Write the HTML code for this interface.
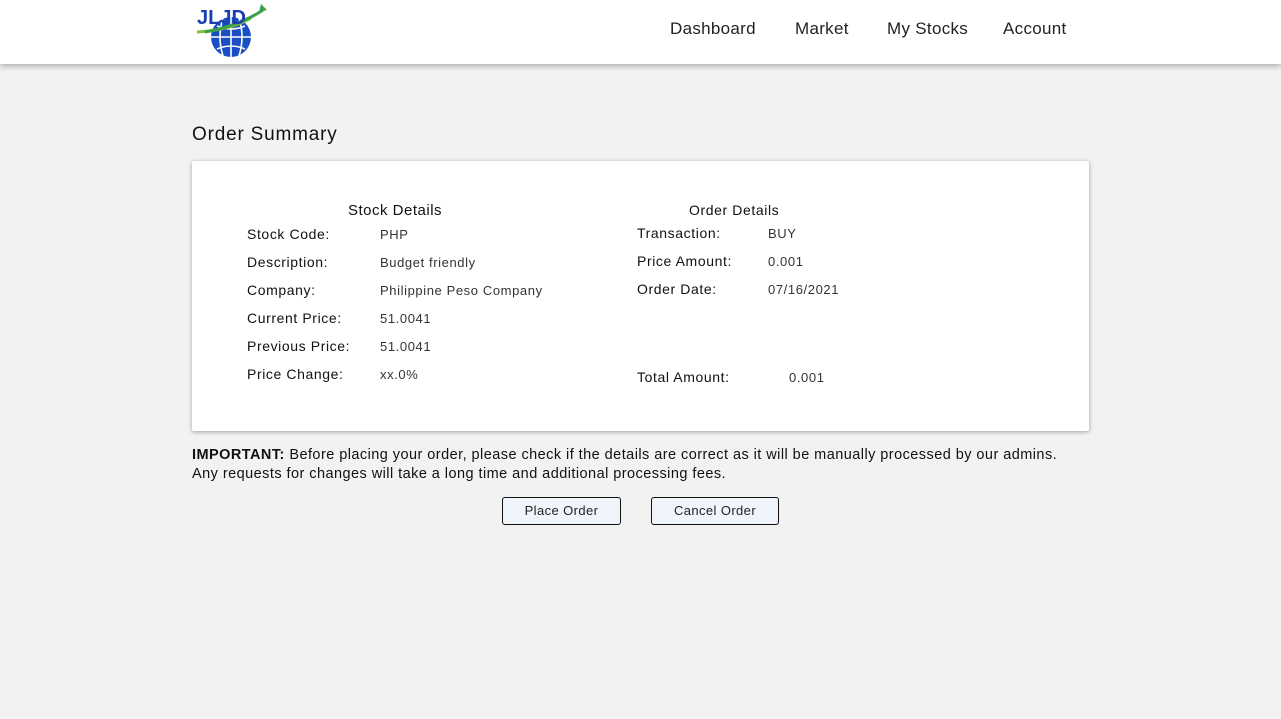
<!DOCTYPE html>
<html><head><style>
body{margin:0;width:1281px;height:719px;background:#f2f2f2;font-family:"Liberation Sans",sans-serif;color:#111;position:relative;overflow:hidden}
.nav{position:absolute;top:0;left:0;width:1281px;height:64px;background:#fff;box-shadow:0 2px 6px rgba(0,0,0,.3)}
.nav a{position:absolute;top:19px;font-size:17px;color:#222;letter-spacing:.3px}
.a{position:absolute;white-space:nowrap}
.card{position:absolute;left:192px;top:161px;width:897px;height:270px;background:#fff;box-shadow:0 1px 4px rgba(0,0,0,.35);border-radius:2px}
.l{font-size:14px;color:#111;letter-spacing:.6px}
.v{font-size:13px;color:#333;letter-spacing:.6px}
.btn{position:absolute;top:497px;height:26px;border:1px solid #111;border-radius:3px;background:#f0f5fc;font-size:13px;text-align:center;line-height:26px;color:#222;letter-spacing:.4px}
</style></head><body>
<div class="nav">
<svg style="position:absolute;left:195px;top:2px" width="76" height="56" viewBox="0 0 76 56">
<circle cx="36" cy="35" r="20" fill="#1a4fc4"/>
<path d="M16 35h40M36 15v40M22 24q14 6 28 0M22 47q14-6 28 0M28 16q-6 19 0 38M44 16q6 19 0 38" stroke="#fff" stroke-width="1.6" fill="none"/>
<path d="M2 30q34-2 54-14" stroke="#7fc13a" stroke-width="3" fill="none"/>
<path d="M10 30q34-6 58-22" stroke="#3aa14a" stroke-width="3" fill="none"/>
<path d="M66 2l6 6-8 2z" fill="#3aa14a"/>
<text x="2" y="22" font-family="Liberation Sans" font-weight="bold" font-size="20" fill="#1a3fb0">JLJD</text>
</svg>
<a style="left:670px">Dashboard</a><a style="left:795px">Market</a><a style="left:887px">My Stocks</a><a style="left:1003px">Account</a>
</div>
<div class="a" style="left:192px;top:124px;font-size:19px;letter-spacing:.8px">Order Summary</div>
<div class="card"></div>
<div class="a" style="left:348px;top:202px;font-size:15px;letter-spacing:.5px">Stock Details</div>
<div class="a" style="left:689px;top:202px;font-size:14px;letter-spacing:.6px">Order Details</div>
<div class="a l" style="left:247px;top:226px">Stock Code:</div><div class="a v" style="left:380px;top:227px">PHP</div>
<div class="a l" style="left:247px;top:254px">Description:</div><div class="a v" style="left:380px;top:255px">Budget friendly</div>
<div class="a l" style="left:247px;top:282px">Company:</div><div class="a v" style="left:380px;top:283px">Philippine Peso Company</div>
<div class="a l" style="left:247px;top:310px">Current Price:</div><div class="a v" style="left:380px;top:311px">51.0041</div>
<div class="a l" style="left:247px;top:338px">Previous Price:</div><div class="a v" style="left:380px;top:339px">51.0041</div>
<div class="a l" style="left:247px;top:366px">Price Change:</div><div class="a v" style="left:380px;top:367px">xx.0%</div>
<div class="a l" style="left:637px;top:225px">Transaction:</div><div class="a v" style="left:768px;top:226px">BUY</div>
<div class="a l" style="left:637px;top:253px">Price Amount:</div><div class="a v" style="left:768px;top:254px">0.001</div>
<div class="a l" style="left:637px;top:281px">Order Date:</div><div class="a v" style="left:768px;top:282px">07/16/2021</div>
<div class="a l" style="left:637px;top:369px">Total Amount:</div><div class="a v" style="left:789px;top:370px">0.001</div>
<div class="a" style="left:192px;top:446px;font-size:14.5px;line-height:19px;color:#111;letter-spacing:.45px"><b>IMPORTANT:</b> Before placing your order, please check if the details are correct as it will be manually processed by our admins.<br>Any requests for changes will take a long time and additional processing fees.</div>
<div class="btn" style="left:502px;width:117px">Place Order</div>
<div class="btn" style="left:651px;width:126px">Cancel Order</div>
</body></html>
